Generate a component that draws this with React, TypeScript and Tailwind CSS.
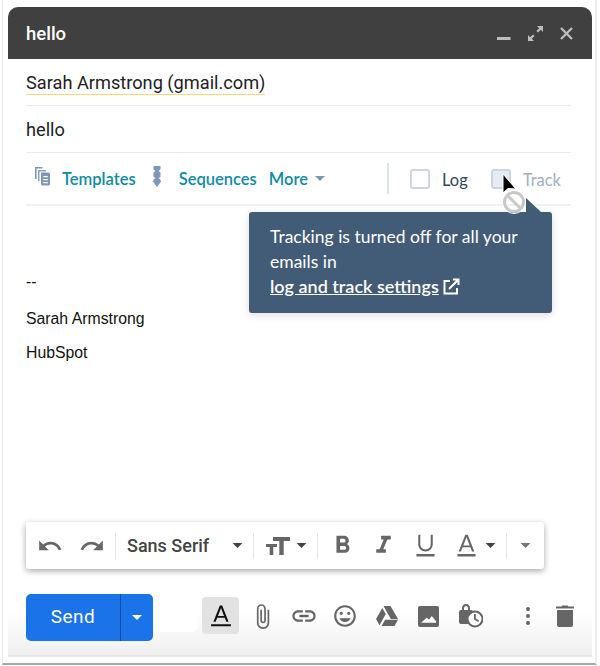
import React from "react";

const Ico = ({ d, size = 24, className = "" }: { d: string; size?: number; className?: string }) => (
  <svg width={size} height={size} viewBox="0 0 24 24" className={className} fill="currentColor"><path d={d} /></svg>
);
const Caret = ({ className = "" }: { className?: string }) => (
  <svg width="10" height="5" viewBox="0 0 10 5" className={`shrink-0 ${className}`} fill="currentColor"><path d="M0 0h10L5 5z" /></svg>
);
const Sep = ({ className = "" }: { className?: string }) => <div className={`w-px h-[26px] shrink-0 bg-[#e4e8ea] ${className}`} />;
const Cell = ({ w, children }: { w: string; children: React.ReactNode }) => (
  <div className={`${w} flex items-center justify-center shrink-0`}>{children}</div>
);

export default function App() {
  return (
    <div className="w-[600px] h-[666px] bg-white overflow-hidden pl-[2px] pr-[3px] pb-[1px] [font-family:'Liberation_Sans',sans-serif]">
      <div className="h-full border-l border-l-[#e8e8e8] border-r-2 border-r-[#ececec] border-b-2 border-b-[#a8a8a8] pl-[5px] pt-[7px]">
      <div className="relative w-[584px] h-[650px] flex flex-col bg-white">
        {/* Title bar */}
        <div className="h-[52px] shrink-0 bg-[#404040] rounded-t-[10px] flex items-center pl-[18px] pr-[19px] text-white">
          <span className="text-[18.500px] font-medium [font-family:Roboto,sans-serif] mt-[3px]">hello</span>
          <div className="ml-auto flex items-center text-[#bdbdbd]">
            <svg width="14" height="14" viewBox="0 0 14 14" className="mr-[17px] mt-[2px]" fill="currentColor"><rect x="0" y="10" width="13.500" height="3" /></svg>
            <svg width="15" height="15" viewBox="0 0 15 15" className="mr-[17px]" fill="currentColor"><path d="M9 0h6v6l-2.200-2.200L10 6.600 8.400 5l2.800-2.800zM0 15V9l2.200 2.200L5 8.400 6.600 10l-2.800 2.800L6 15z" /></svg>
            <svg width="13" height="13" viewBox="0 0 13 13" stroke="currentColor" strokeWidth="2.400"><path d="M1 1l11 11M12 1L1 12" /></svg>
          </div>
        </div>
        {/* Recipient */}
        <div className="mx-[18px] w-[545px] h-[47px] shrink-0 border-b border-[#e9ebec] flex items-center [font-family:Roboto,sans-serif] text-[18.200px] text-[#202124]">
          <span className="border-b border-[#fbd67c] leading-[22px] mt-[2px]">Sarah Armstrong (gmail.com)</span>
        </div>
        {/* Subject */}
        <div className="mx-[18px] w-[545px] h-[47px] shrink-0 border-b border-[#e9ebec] flex items-center [font-family:Roboto,sans-serif] text-[18.200px] text-[#202124]">
          <span className="mt-[2px]">hello</span>
        </div>
        {/* HubSpot toolbar */}
        <div className="mx-[18px] w-[545px] h-[53px] shrink-0 border-b-2 border-[#f0f1f2] flex items-center [font-family:Lato,sans-serif] text-[16.500px]">
          <svg width="17" height="20" viewBox="0 0 17 20" className="ml-[8px] mt-[-4px] shrink-0 text-[#7c98b6]" fill="currentColor">
            <path d="M1 0h7.500v1.600H2.600V12H1z" />
            <path d="M4 3h8v1.500H5.500V14H4z" opacity=".9" />
            <path fillRule="evenodd" d="M7 5.500h7.500a1.500 1.500 0 0 1 1.500 1.500v10a1.500 1.500 0 0 1-1.500 1.500H8.500A1.500 1.500 0 0 1 7 17zM9.200 9v1.300h4.600V9zm0 3v1.300h4.600V12zm0 3v1.300h4.600V15z" />
          </svg>
          <span className="ml-[11px] mt-[2px] font-semibold text-[#0f8ba8]">Templates</span>
          <svg width="10" height="21" viewBox="0 0 10 21" className="ml-[16px] mt-[-5px] shrink-0 text-[#7c98b6]" fill="currentColor">
            <path d="M1.500 0h7v3.500l-2 1.500 2 1.600V11l-2 1 2 1.500V15H1.500v-1.500l2-1.500-2-1V6.600l2-1.600-2-1.500z" />
            <path d="M0.500 15h9L5 21z" />
          </svg>
          <span className="ml-[17px] mt-[2px] font-semibold text-[#0f8ba8]">Sequences</span>
          <span className="ml-[12px] mt-[2px] font-semibold text-[#0f8ba8]">More</span>
          <Caret className="ml-[7px] text-[#7c98b6]" />
          <div className="ml-[62px] w-[2px] h-[31px] shrink-0 bg-[#dfe3eb]" />
          <div className="ml-[21px] w-[20px] h-[20px] shrink-0 rounded-[3px] border-2 border-[#cbd6e2] bg-white" />
          <span className="ml-[12px] mt-[4px] text-[#33475b]">Log</span>
          <div className="ml-[23px] w-[20px] h-[20px] shrink-0 rounded-[3px] border-2 border-[#cbd6e2] bg-[#e5ebf2]" />
          <span className="ml-[12px] mt-[4px] text-[#9fb0c4]">Track</span>
        </div>
        {/* Body */}
        <div className="flex-1 flex flex-col min-h-0 mx-[18px] text-[15.800px] text-[#111]">
          <div className="mt-[66px] leading-[20px]">--</div>
          <div className="mt-[17px] leading-[20px]">Sarah Armstrong</div>
          <div className="mt-[14px] leading-[20px]">HubSpot</div>
        </div>
        {/* Format toolbar */}
        <div className="ml-[18px] w-[518px] h-[47px] shrink-0 bg-white rounded-[3px] shadow-[0_2px_6px_rgba(0,0,0,0.35)] flex items-center text-[#666] relative z-10">
          <Cell w="w-[48px]"><Ico size={26} d="M12.500 8c-2.650 0-5.050.99-6.900 2.600L2 7v9h9l-3.620-3.620c1.390-1.160 3.160-1.880 5.120-1.880 3.540 0 6.550 2.310 7.600 5.500l2.370-.78C21.080 11.030 17.150 8 12.500 8z" /></Cell>
          <Cell w="w-[36px]"><Ico size={26} d="M18.400 10.600C16.550 8.990 14.150 8 11.500 8c-4.650 0-8.580 3.030-9.960 7.220L3.900 16c1.050-3.190 4.050-5.500 7.600-5.500 1.950 0 3.730.72 5.120 1.880L13 16h9V7l-3.600 3.600z" /></Cell>
          <Sep className="ml-[5px]" />
          <span className="ml-[11px] text-[18px] font-medium text-[#444] [font-family:Roboto,sans-serif] w-[105px] shrink-0">Sans Serif</span>
          <Caret className="text-[#444] w-[11px]" />
          <Sep className="ml-[10px]" />
          <svg width="24" height="20" viewBox="0 0 24 20" className="ml-[12px] shrink-0" fill="currentColor"><path d="M7 1h17v4h-6.300v14h-4.400V5H7zM0 8h11v3H7.300v8H3.700v-8H0z" /></svg>
          <Caret className="ml-[6px] text-[#444] w-[11px]" />
          <Sep className="ml-[10px]" />
          <Cell w="w-[48px]"><Ico size={29} d="M15.600 10.790c.97-.67 1.650-1.770 1.650-2.790 0-2.260-1.750-4-4-4H7v14h7.040c2.090 0 3.710-1.700 3.710-3.790 0-1.520-.86-2.820-2.150-3.420zM10 6.500h3c.83 0 1.500.67 1.500 1.500s-.67 1.500-1.500 1.500h-3v-3zm3.500 9H10v-3h3.500c.83 0 1.500.67 1.500 1.500s-.67 1.500-1.500 1.500z" /></Cell>
          <Cell w="w-[34px]"><Ico size={29} d="M10 4v3h2.210l-3.420 8H6v3h8v-3h-2.210l3.420-8H18V4z" /></Cell>
          <Cell w="w-[50px]"><Ico size={29} d="M12 17c3.310 0 6-2.690 6-6V3h-1.700v8c0 2.400-1.900 4.300-4.300 4.300S7.700 13.400 7.700 11V3H6v8c0 3.310 2.690 6 6 6zm-7.500 2v2h15v-2z" /></Cell>
          <Cell w="w-[33px]"><Ico size={29} d="M11 3L5.500 17h1.900l1.400-3.600h6.400l1.400 3.600h1.900L13 3h-2zm-1.600 9L12 5.200 14.600 12zM4.500 19v2h15v-2z" /></Cell>
          <Caret className="ml-[2px] text-[#444] w-[11px]" />
          <Sep className="ml-[10px]" />
          <Caret className="ml-[13px] text-[#777] w-[11px]" />
        </div>
        {/* Action bar */}
        <div className="h-[88px] shrink-0 flex items-start pl-[18px] pt-[25px] bg-gradient-to-b from-white from-50% to-[#efefef] border-b-2 border-[#e6e6e6] text-[#666]">
          <div className="h-[47px] w-[127px] shrink-0 rounded-[5px] bg-[#1a73e8] flex text-white">
            <div className="w-[94px] flex items-center justify-center text-[19px] [font-family:Roboto,sans-serif] tracking-[0.5px]">Send</div>
            <div className="flex-1 border-l border-[#0f4f9f] flex items-center justify-center"><Caret className="w-[10px]" /></div>
          </div>
          <div className="w-[45px] h-[38px] shrink-0 bg-white rounded-br-[6px]" />
          <div className="ml-[4px] mt-[3px] w-[37px] h-[37px] shrink-0 rounded-[4px] bg-[#e2e2e2] flex items-center justify-center text-[#111]">
            <Ico size={28} d="M11 3L5.500 17h1.900l1.400-3.600h6.400l1.400 3.600h1.900L13 3h-2zm-1.600 9L12 5.200 14.600 12zM3.500 19v1.800h17V19z" />
          </div>
          <div className="flex items-center mt-[9px] h-[26px]">
            <Cell w="w-[47px]"><Ico size={27} d="M16.500 6v11.500c0 2.210-1.790 4-4 4s-4-1.790-4-4V5c0-1.380 1.120-2.500 2.500-2.500s2.500 1.120 2.500 2.500v10.500c0 .55-.45 1-1 1s-1-.45-1-1V6H10v9.500c0 1.380 1.120 2.500 2.500 2.500s2.500-1.120 2.500-2.500V5c0-2.210-1.790-4-4-4S7 2.790 7 5v12.500c0 3.040 2.460 5.500 5.500 5.500s5.500-2.460 5.500-5.500V6h-1.500z" /></Cell>
            <Cell w="w-[35px]"><Ico size={28} d="M3.900 12c0-1.710 1.390-3.100 3.100-3.100h4V7H7c-2.760 0-5 2.240-5 5s2.240 5 5 5h4v-1.900H7c-1.710 0-3.100-1.390-3.100-3.100zM8 13h8v-2H8v2zm9-6h-4v1.900h4c1.710 0 3.100 1.390 3.100 3.100s-1.390 3.100-3.100 3.100h-4V17h4c2.760 0 5-2.240 5-5s-2.240-5-5-5z" /></Cell>
            <Cell w="w-[48px]"><Ico size={26} d="M11.990 2C6.470 2 2 6.480 2 12s4.470 10 9.990 10C17.520 22 22 17.520 22 12S17.520 2 11.990 2zM12 20c-4.420 0-8-3.580-8-8s3.580-8 8-8 8 3.580 8 8-3.580 8-8 8zm3.500-9c.83 0 1.500-.67 1.500-1.500S16.330 8 15.500 8 14 8.670 14 9.500s.67 1.500 1.500 1.500zm-7 0c.83 0 1.500-.67 1.500-1.500S9.330 8 8.500 8 7 8.670 7 9.500 7.670 11 8.500 11zm3.500 6.500c2.330 0 4.310-1.460 5.110-3.500H6.890c.8 2.040 2.780 3.500 5.110 3.500z" /></Cell>
            <Cell w="w-[35px]">
              <svg width="22" height="20" viewBox="0 0 22 20" fill="currentColor"><path d="M7.500 0h7L22 13h-7.200L7.500 0zM6.300 2L0 13l3.500 6.200L9.800 8zM5.500 20l3.600-6.200H22L18.500 20z" /></svg>
            </Cell>
            <Cell w="w-[48px]">
              <svg width="21" height="21" viewBox="0 0 22 22" fill="currentColor"><path fillRule="evenodd" d="M2 0h18a2 2 0 0 1 2 2v18a2 2 0 0 1-2 2H2a2 2 0 0 1-2-2V2a2 2 0 0 1 2-2zM3 17.500h16v-1.500l-4.500-5.500-3 3.700-2.500-2-6 5.500z" /></svg>
            </Cell>
            <Cell w="w-[37px]">
              <svg width="24" height="24" viewBox="0 0 24 24" fill="currentColor">
                <path fillRule="evenodd" d="M7 0c2.500 0 4 1.800 4 4.200V7H3V4.200C3 1.800 4.500 0 7 0zM5 7V4.500C5 3 5.700 2 7 2s2 1 2 2.500V7z" />
                <rect x="0" y="6" width="14" height="14" rx="2" />
                <circle cx="16" cy="15" r="7.500" fill="#fff" stroke="currentColor" strokeWidth="2" />
                <path d="M15 10h1.800v4.600l3.300 2-1 1.500L15 15.600z" />
              </svg>
            </Cell>
            <Cell w="w-[20px] ml-[29px]">
              <svg width="6" height="20" viewBox="0 0 6 20" fill="currentColor"><circle cx="3" cy="3" r="2" /><circle cx="3" cy="10" r="2" /><circle cx="3" cy="17" r="2" /></svg>
            </Cell>
            <Cell w="w-[18px] ml-[18px]">
              <svg width="18" height="22" viewBox="0 0 18 22" fill="currentColor"><path d="M1 5h16v15a2 2 0 0 1-2 2H3a2 2 0 0 1-2-2zM0 1.500h5.500L6.500.5h5l1 1H18V3.500H0z" /></svg>
            </Cell>
          </div>
        </div>

        {/* Tooltip */}
        <div className="absolute left-[241px] top-[205px] w-[303px] h-[101px] rounded-[3px] bg-[#425b76] shadow-[0_2px_8px_rgba(0,0,0,0.14)] pl-[21px] pt-[12px] text-white [font-family:Lato,sans-serif] text-[17.500px] leading-[25px] z-20">
          <div className="absolute left-[277px] top-[-14px] w-0 h-0 border-r-[15px] border-r-transparent border-b-[14px] border-b-[#425b76]" />
          <div>Tracking is turned off for all your</div>
          <div>emails in</div>
          <div className="flex items-center">
            <span className="underline font-semibold text-[18px]">log and track settings</span>
            <svg width="17" height="17" viewBox="0 0 17 17" className="ml-[4px]" fill="none" stroke="currentColor" strokeWidth="2"><path d="M7 3H1.500v12.500H14V10" /><path d="M6 11l9-9M10 1.500h5.500V7" /></svg>
          </div>
        </div>
        {/* Cursor */}
        <svg width="16" height="26" viewBox="0 0 16 26" className="absolute left-[494px] top-[166px] z-30"><path d="M1 1v19l5-4.500 8 .5z" fill="#000" stroke="#fff" strokeWidth="1" /></svg>
        <svg width="28" height="28" viewBox="0 0 28 28" className="absolute left-[492px] top-[181px] z-30">
          <circle cx="14" cy="14" r="11.500" fill="none" stroke="#fff" strokeWidth="1" />
          <circle cx="14" cy="14" r="9.500" fill="none" stroke="#c9c9c9" strokeWidth="3" />
          <path d="M7 7l14 14" stroke="#c9c9c9" strokeWidth="3" />
        </svg>
      </div>
      </div>
    </div>
  );
}
